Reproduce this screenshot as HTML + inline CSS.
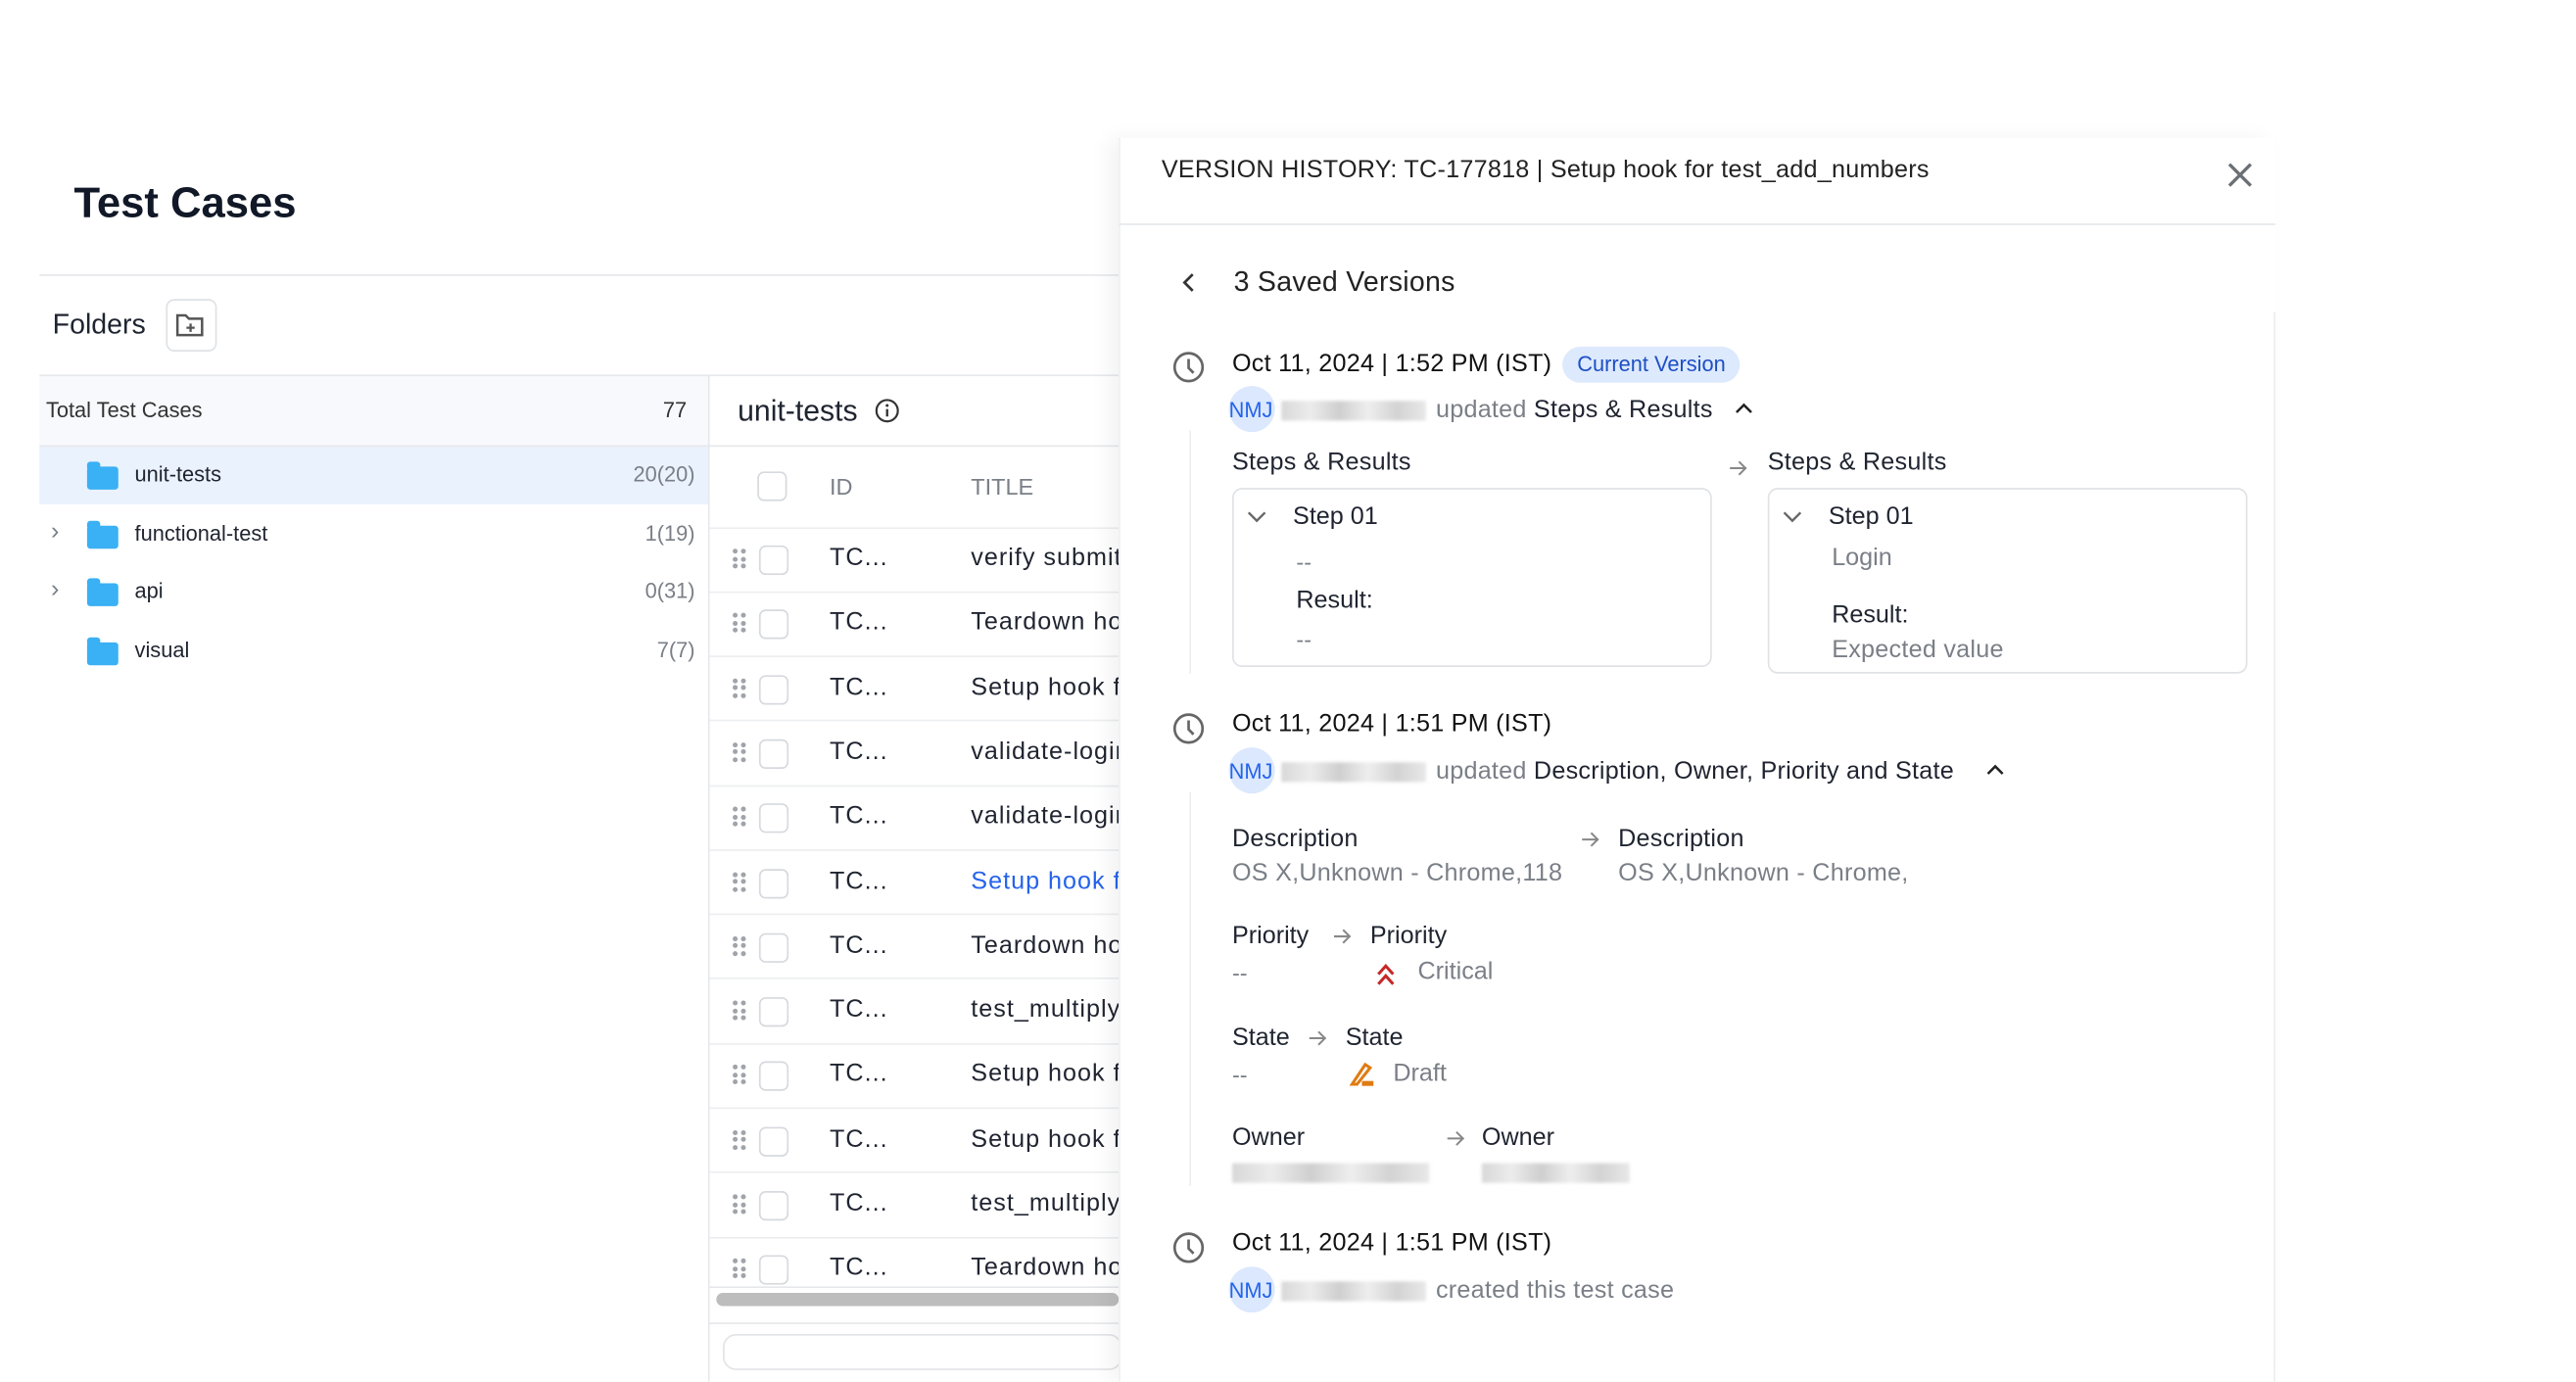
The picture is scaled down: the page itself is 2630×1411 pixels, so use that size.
<!DOCTYPE html>
<html><head><meta charset="utf-8"><style>
html,body{margin:0;padding:0;background:#fff;overflow:hidden;width:2630px;height:1409px}
#w{position:absolute;left:0;top:0;width:1568px;height:841px;transform:scale(1.6773);transform-origin:0 0;font-family:"Liberation Sans",sans-serif;color:#1f2430}
.a{position:absolute;white-space:nowrap;line-height:20px}
.g{color:#7a7f87}
.ln{position:absolute;background:#e6e8eb}
.fold{position:absolute;width:19px;height:14px;background:#3ab0f5;border-radius:2px}
.fold:before{content:"";position:absolute;left:0;top:-3px;width:8px;height:4px;background:#3ab0f5;border-radius:2px 2px 0 0}
.cb{position:absolute;width:16px;height:16px;border:1px solid #d6d9de;border-radius:4px;background:#fff}
.dr{position:absolute;width:8px;height:12px}
.dr i{position:absolute;width:3px;height:3px;border-radius:50%;background:#a0a4aa}
.row{position:absolute;left:432px;width:249px;height:1px;background:#eceef0}
.av{position:absolute;width:28px;height:28px;border-radius:50%;background:#dbe8fd}
.blur{position:absolute;height:12px;background:linear-gradient(90deg,#d8d8d8,#ececec 20%,#cfcfcf 40%,#eee 60%,#d3d3d3 80%,#e8e8e8);filter:blur(1px)}
.ar{position:absolute;width:12px;height:10px}
.p{letter-spacing:.15px}
</style></head><body><div id="w">

<div class="a" style="left:45px;top:108px;font-size:26px;line-height:30px;font-weight:bold;color:#111827">Test Cases</div>
<div class="ln" style="left:24px;top:167px;width:657px;height:1px"></div>
<div class="a" style="left:32px;top:188px;font-size:17px">Folders</div>
<div style="position:absolute;left:101px;top:182px;width:29px;height:30px;border:1px solid #dfe2e6;border-radius:5px"></div>
<svg style="position:absolute;left:106px;top:189px" width="20" height="17" viewBox="0 0 20 17"><path d="M2 3h5l2 2h8v10H2z" fill="none" stroke="#555" stroke-width="1.5"/><path d="M10 8v5M7.5 10.5h5" stroke="#555" stroke-width="1.4"/></svg>

<div style="position:absolute;left:24px;top:228px;width:407px;height:43px;background:#f7f9fc"></div>
<div class="ln" style="left:24px;top:228px;width:657px;height:1px"></div>
<div class="a" style="left:28px;top:240px;font-size:13px;color:#333">Total Test Cases</div>
<div class="a" style="left:400px;top:240px;font-size:13px;color:#333;width:18px;text-align:right">77</div>
<div style="position:absolute;left:24px;top:271px;width:407px;height:36px;background:#eaf2fd"></div>
<div class="ln" style="left:24px;top:271px;width:657px;height:1px"></div>
<div class="fold" style="left:53px;top:284px"></div><div class="a" style="left:82px;top:279px;font-size:13px">unit-tests</div><div class="a g" style="left:360px;top:279px;width:63px;text-align:right;font-size:13px">20(20)</div>
<div class="a g" style="left:31px;top:314px;font-size:15px">›</div><div class="fold" style="left:53px;top:320px"></div><div class="a" style="left:82px;top:315px;font-size:13px">functional-test</div><div class="a g" style="left:360px;top:315px;width:63px;text-align:right;font-size:13px">1(19)</div>
<div class="a g" style="left:31px;top:349px;font-size:15px">›</div><div class="fold" style="left:53px;top:355px"></div><div class="a" style="left:82px;top:350px;font-size:13px">api</div><div class="a g" style="left:360px;top:350px;width:63px;text-align:right;font-size:13px">0(31)</div>
<div class="fold" style="left:53px;top:391px"></div><div class="a" style="left:82px;top:386px;font-size:13px">visual</div><div class="a g" style="left:360px;top:386px;width:63px;text-align:right;font-size:13px">7(7)</div>

<div class="ln" style="left:431px;top:228px;width:1px;height:613px"></div>
<div class="a" style="left:449px;top:240px;font-size:18px">unit-tests</div>
<svg style="position:absolute;left:532px;top:242px" width="16" height="16"><circle cx="8" cy="8" r="6.5" fill="none" stroke="#333" stroke-width="1.3"/><path d="M8 7v4.5" stroke="#333" stroke-width="1.4"/><circle cx="8" cy="4.8" r=".9" fill="#333"/></svg>
<div class="cb" style="left:461px;top:287px"></div>
<div class="a g" style="left:505px;top:286px;font-size:14px">ID</div>
<div class="a g" style="left:591px;top:286px;font-size:14px">TITLE</div>
<div class="row" style="top:321px"></div>

<div id="rows"></div>
<div style="position:absolute;left:436px;top:787px;width:245px;height:8px;background:#bdbdbd;border-radius:4px"></div>
<div class="ln" style="left:432px;top:783px;width:249px;height:1px"></div>
<div class="ln" style="left:432px;top:805px;width:249px;height:1px"></div>
<div style="position:absolute;left:440px;top:812px;width:241px;height:20px;border:1px solid #e2e4e7;border-radius:8px"></div>

<!-- panel -->
<div style="position:absolute;left:681px;top:84px;width:704px;height:757px;background:#fff;box-shadow:-6px 0 12px rgba(0,0,0,.05)"></div>
<div class="ln" style="left:681px;top:84px;width:1px;height:757px;background:#eef0f2"></div>
<div class="a p" style="left:707px;top:94px;font-size:15px;color:#222">VERSION HISTORY: TC-177818 | Setup hook for test_add_numbers</div>
<svg style="position:absolute;left:1356px;top:99px" width="15" height="15"><path d="M1 1L14 14M14 1L1 14" stroke="#6b7075" stroke-width="2"/></svg>
<div class="ln" style="left:681px;top:136px;width:704px;height:1px"></div>
<svg style="position:absolute;left:719px;top:166px" width="10" height="12"><path d="M7 1L2 6l5 5" fill="none" stroke="#333" stroke-width="1.6"/></svg>
<div class="a p" style="left:751px;top:162px;font-size:17px;color:#222">3 Saved Versions</div>
<div class="ln" style="left:1384px;top:190px;width:1px;height:651px;background:#ececec"></div>

<!-- entry 1 -->
<svg style="position:absolute;left:713px;top:213px" width="21" height="21"><circle cx="10.5" cy="10.5" r="8.5" fill="none" stroke="#666" stroke-width="1.6"/><path d="M10.5 5.5v5.5l3 3" fill="none" stroke="#666" stroke-width="1.6"/></svg>
<div class="a p" style="left:750px;top:212px;font-size:15px;color:#111">Oct 11, 2024 | 1:52 PM (IST)</div>
<div class="a" style="left:951px;top:211px;height:22px;line-height:22px;padding:0 9px;background:#dde9fc;color:#1d4fc4;font-size:13px;border-radius:11px">Current Version</div>
<div class="ln" style="left:724px;top:262px;width:1px;height:148px;background:#eceef0"></div>
<div class="av" style="left:748px;top:235px"></div><div class="a" style="left:748px;top:240px;font-size:13px;color:#2563eb">NMJ</div>
<div class="blur" style="left:780px;top:244px;width:88px"></div>
<div class="a p" style="left:874px;top:240px;font-size:15px"><span class="g">updated</span> Steps &amp; Results</div>
<svg style="position:absolute;left:1056px;top:245px" width="11" height="8"><path d="M1 6l4.5-4.5L10 6" fill="none" stroke="#222" stroke-width="1.5"/></svg>
<div class="a p" style="left:750px;top:272px;font-size:15px">Steps &amp; Results</div>
<svg class="ar" style="left:1052px;top:280px"><path d="M1 5h10M6.5 1l4 4-4 4" fill="none" stroke="#888" stroke-width="1.2"/></svg>
<div class="a p" style="left:1076px;top:272px;font-size:15px">Steps &amp; Results</div>
<div style="position:absolute;left:750px;top:297px;width:290px;height:107px;border:1px solid #e0e2e5;border-radius:6px"></div>
<div style="position:absolute;left:1076px;top:297px;width:290px;height:111px;border:1px solid #e0e2e5;border-radius:6px"></div>
<svg style="position:absolute;left:759px;top:310px" width="12" height="9"><path d="M1 2l5 5 5-5" fill="none" stroke="#666" stroke-width="1.4"/></svg>
<div class="a" style="left:787px;top:305px;font-size:15px">Step 01</div>
<div class="a g" style="left:789px;top:332px;font-size:14px">--</div>
<div class="a" style="left:789px;top:356px;font-size:15px">Result:</div>
<div class="a g" style="left:789px;top:379px;font-size:14px">--</div>
<svg style="position:absolute;left:1085px;top:310px" width="12" height="9"><path d="M1 2l5 5 5-5" fill="none" stroke="#666" stroke-width="1.4"/></svg>
<div class="a" style="left:1113px;top:305px;font-size:15px">Step 01</div>
<div class="a g" style="left:1115px;top:330px;font-size:15px">Login</div>
<div class="a" style="left:1115px;top:365px;font-size:15px">Result:</div>
<div class="a g p" style="left:1115px;top:386px;font-size:15px">Expected value</div>

<!-- entry 2 -->
<svg style="position:absolute;left:713px;top:433px" width="21" height="21"><circle cx="10.5" cy="10.5" r="8.5" fill="none" stroke="#666" stroke-width="1.6"/><path d="M10.5 5.5v5.5l3 3" fill="none" stroke="#666" stroke-width="1.6"/></svg>
<div class="a p" style="left:750px;top:431px;font-size:15px;color:#111">Oct 11, 2024 | 1:51 PM (IST)</div>
<div class="ln" style="left:724px;top:482px;width:1px;height:240px;background:#eceef0"></div>
<div class="av" style="left:748px;top:455px"></div><div class="a" style="left:748px;top:460px;font-size:13px;color:#2563eb">NMJ</div>
<div class="blur" style="left:780px;top:464px;width:88px"></div>
<div class="a p" style="left:874px;top:460px;font-size:15px"><span class="g">updated</span> Description, Owner, Priority and State</div>
<svg style="position:absolute;left:1209px;top:465px" width="11" height="8"><path d="M1 6l4.5-4.5L10 6" fill="none" stroke="#222" stroke-width="1.5"/></svg>
<div class="a p" style="left:750px;top:501px;font-size:15px">Description</div>
<svg class="ar" style="left:962px;top:506px"><path d="M1 5h10M6.5 1l4 4-4 4" fill="none" stroke="#888" stroke-width="1.2"/></svg>
<div class="a p" style="left:985px;top:501px;font-size:15px">Description</div>
<div class="a g p" style="left:750px;top:522px;font-size:15px">OS X,Unknown - Chrome,118</div>
<div class="a g p" style="left:985px;top:522px;font-size:15px">OS X,Unknown - Chrome,</div>
<div class="a" style="left:750px;top:560px;font-size:15px">Priority</div>
<svg class="ar" style="left:811px;top:565px"><path d="M1 5h10M6.5 1l4 4-4 4" fill="none" stroke="#888" stroke-width="1.2"/></svg>
<div class="a" style="left:834px;top:560px;font-size:15px">Priority</div>
<div class="a g" style="left:750px;top:582px;font-size:14px">--</div>
<svg style="position:absolute;left:837px;top:585px" width="13" height="16"><path d="M2 8l4.5-5 4.5 5M2 14l4.5-5 4.5 5" fill="none" stroke="#c62828" stroke-width="1.8"/></svg>
<div class="a g" style="left:863px;top:582px;font-size:15px">Critical</div>
<div class="a" style="left:750px;top:622px;font-size:15px">State</div>
<svg class="ar" style="left:796px;top:627px"><path d="M1 5h10M6.5 1l4 4-4 4" fill="none" stroke="#888" stroke-width="1.2"/></svg>
<div class="a" style="left:819px;top:622px;font-size:15px">State</div>
<div class="a g" style="left:750px;top:644px;font-size:14px">--</div>
<svg style="position:absolute;left:820px;top:645px" width="18" height="18"><path d="M3 15L11 3l3 2-8 10z" fill="none" stroke="#e07b12" stroke-width="1.8"/><rect x="9" y="13" width="7" height="3" fill="#e07b12"/></svg>
<div class="a g" style="left:848px;top:644px;font-size:15px">Draft</div>
<div class="a" style="left:750px;top:683px;font-size:15px">Owner</div>
<svg class="ar" style="left:880px;top:688px"><path d="M1 5h10M6.5 1l4 4-4 4" fill="none" stroke="#888" stroke-width="1.2"/></svg>
<div class="a" style="left:902px;top:683px;font-size:15px">Owner</div>
<div class="blur" style="left:750px;top:708px;width:120px"></div>
<div class="blur" style="left:902px;top:708px;width:90px"></div>

<!-- entry 3 -->
<svg style="position:absolute;left:713px;top:749px" width="21" height="21"><circle cx="10.5" cy="10.5" r="8.5" fill="none" stroke="#666" stroke-width="1.6"/><path d="M10.5 5.5v5.5l3 3" fill="none" stroke="#666" stroke-width="1.6"/></svg>
<div class="a p" style="left:750px;top:747px;font-size:15px;color:#111">Oct 11, 2024 | 1:51 PM (IST)</div>
<div class="av" style="left:748px;top:771px"></div><div class="a" style="left:748px;top:776px;font-size:13px;color:#2563eb">NMJ</div>
<div class="blur" style="left:780px;top:780px;width:88px"></div>
<div class="a g p" style="left:874px;top:776px;font-size:15px">created this test case</div>

</div>
<script>
var t=["verify submit","Teardown hook","Setup hook for","validate-login","validate-login","Setup hook for","Teardown hook","test_multiply","Setup hook for","Setup hook for","test_multiply","Teardown hook"];
var h="";
for(var i=0;i<12;i++){var c=340+i*39.3;
h+='<div class="dr" style="left:446px;top:'+(c-6)+'px"><i style="left:0;top:0"></i><i style="left:5px;top:0"></i><i style="left:0;top:4.5px"></i><i style="left:5px;top:4.5px"></i><i style="left:0;top:9px"></i><i style="left:5px;top:9px"></i></div>';
h+='<div class="cb" style="left:462px;top:'+(c-8)+'px"></div>';
h+='<div class="a" style="left:505px;top:'+(c-10)+'px;font-size:15px;letter-spacing:.6px">TC...</div>';
h+='<div class="a" style="left:591px;top:'+(c-10)+'px;font-size:15px;letter-spacing:.6px;width:90px;overflow:hidden;'+(i==5?'color:#2563eb':'')+'">'+t[i]+'</div>';
if(i<11)h+='<div class="row" style="top:'+(c+19.6)+'px"></div>';}
document.getElementById("rows").outerHTML=h;
</script>
</body></html>
